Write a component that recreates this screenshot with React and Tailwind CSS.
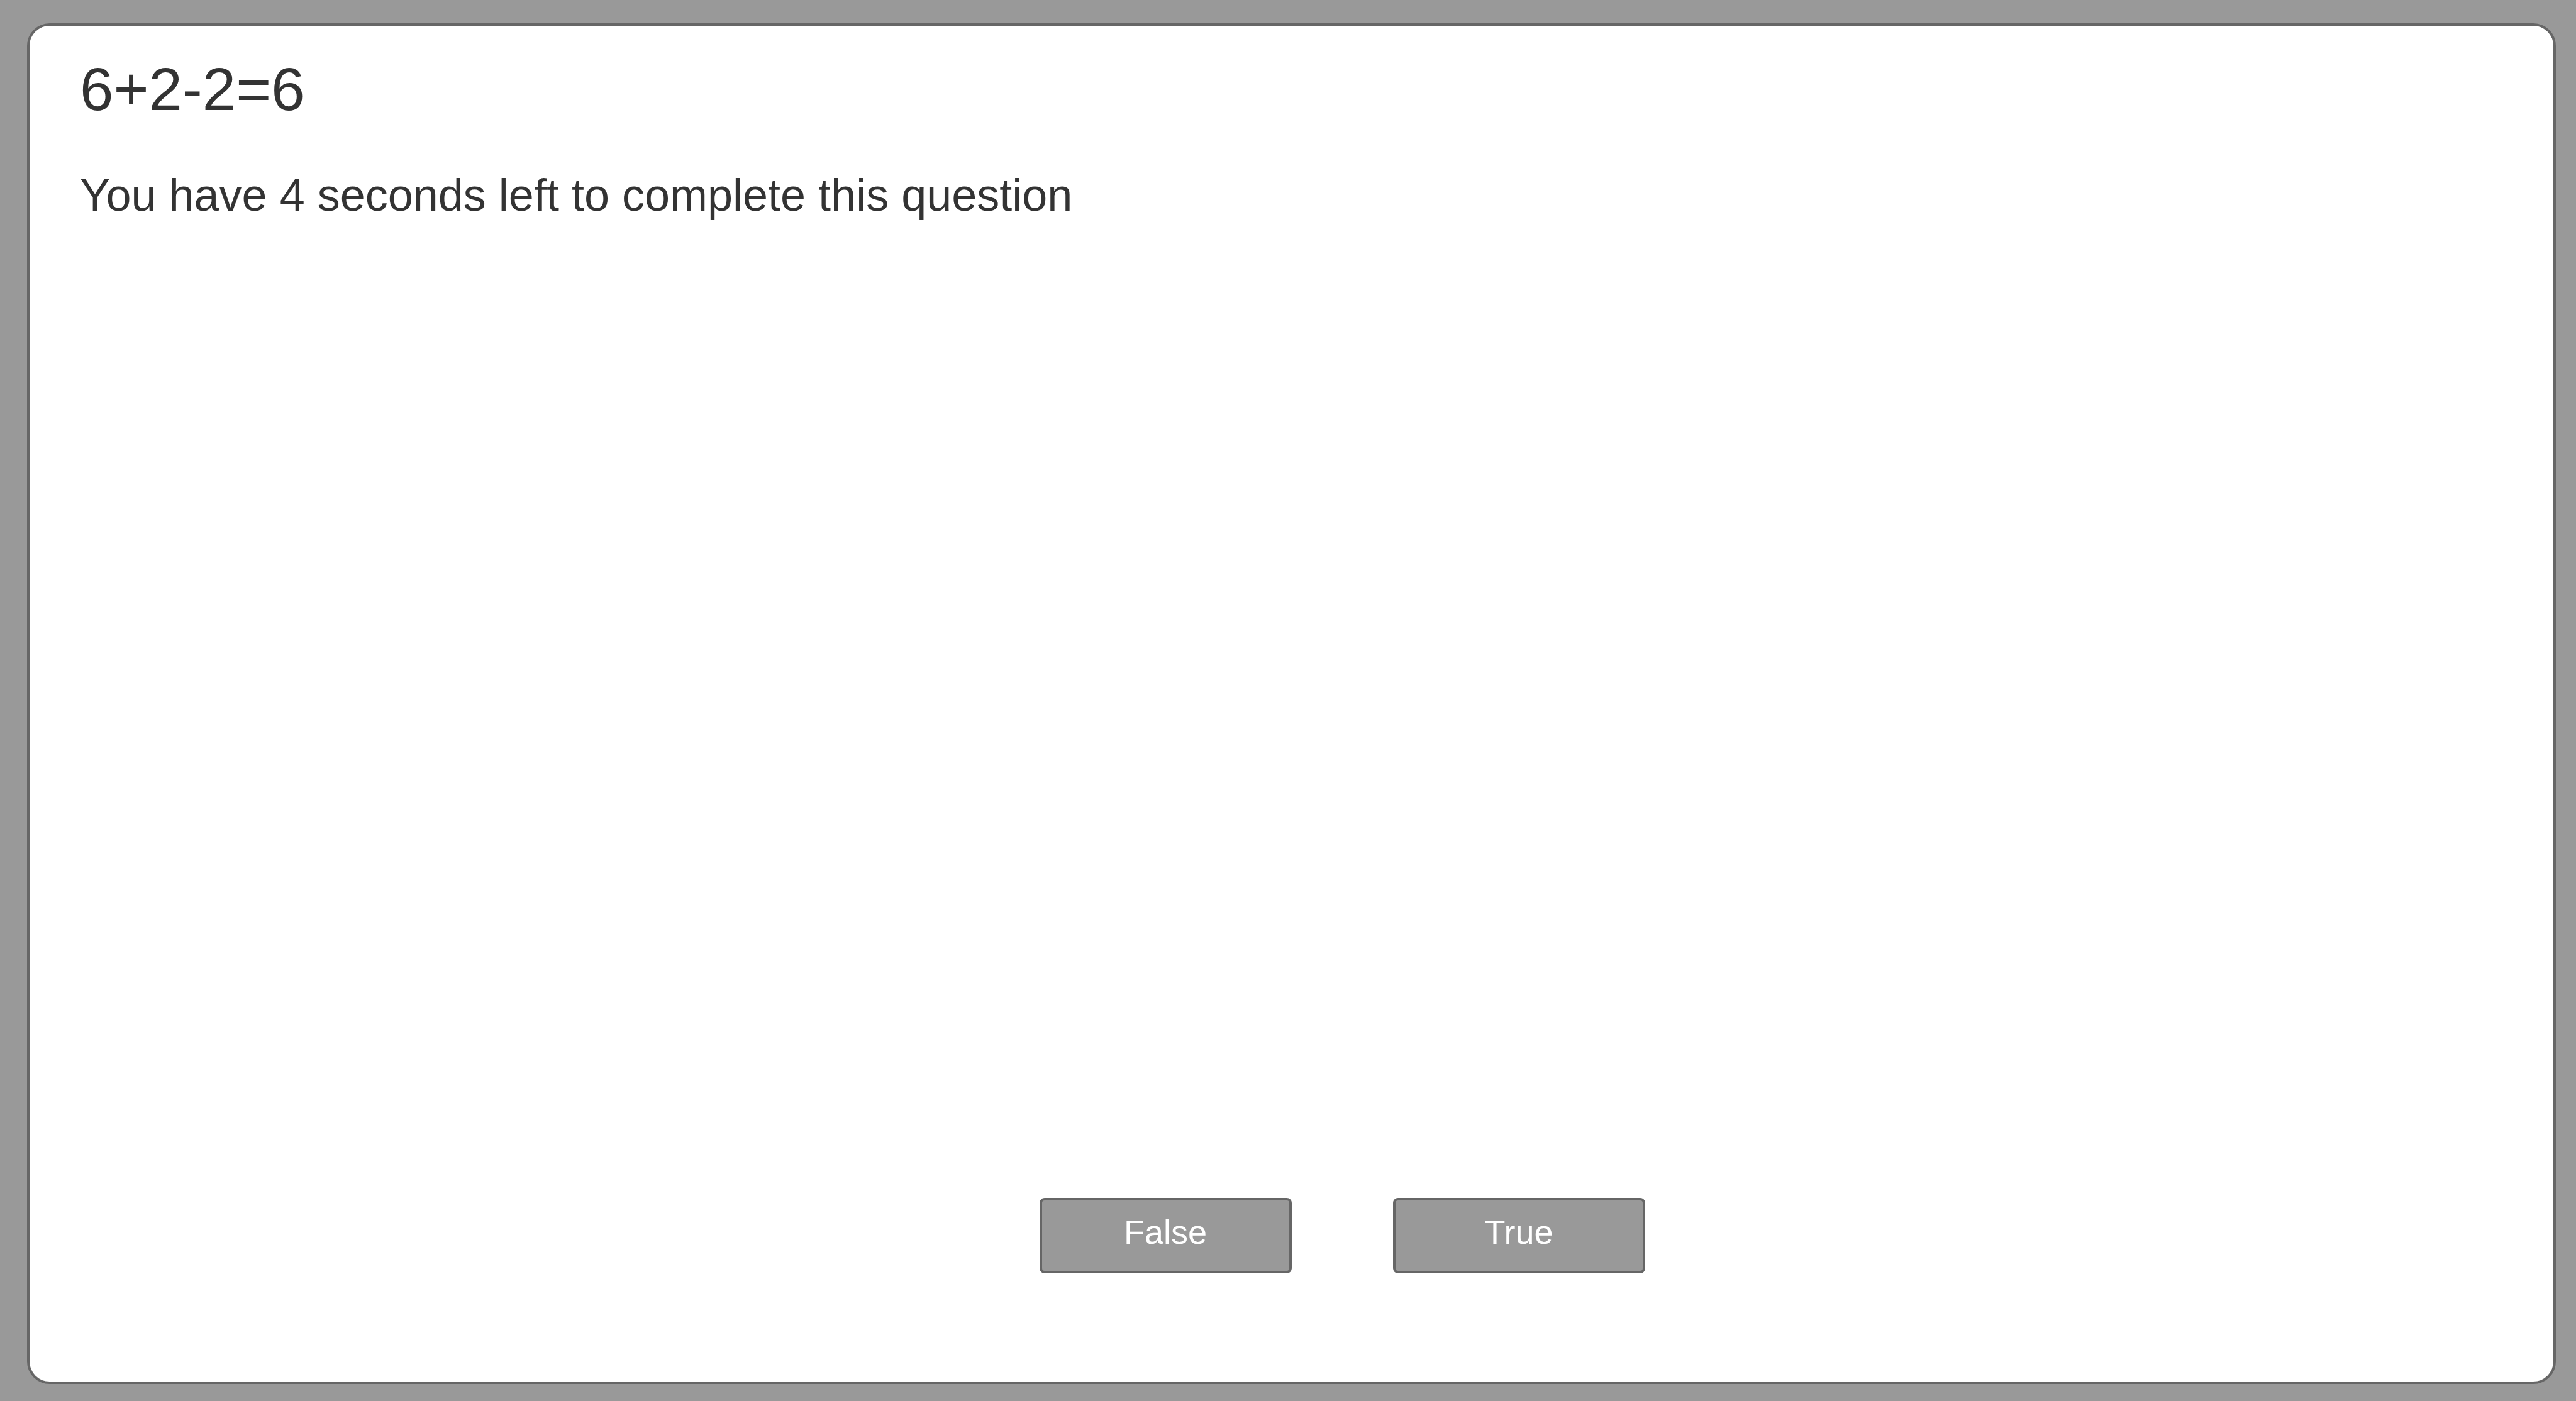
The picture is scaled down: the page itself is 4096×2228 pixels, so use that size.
function AnswerButton({ children }) {
  return (
    <button
      type="button"
      className="ml-[161px] h-30 w-[401px] rounded-lg border-4 border-[#666666] bg-[#999999] pb-3 text-[54px] leading-[64px] text-white"
    >
      {children}
    </button>
  );
}

export default function App() {
  return (
    <div className="flex min-h-screen flex-col bg-[#999999] pt-[37px] pr-8 pb-[27px] pl-[43px] font-['Liberation_Sans',Arial,sans-serif] text-[#333333]">
      <main className="flex flex-1 flex-col rounded-[36px] border-4 border-[#666666] bg-white px-20 pt-[45px] pb-[172px]">
        <h1 className="text-[96px] leading-[112px]">6+2-2=6</h1>
        <p className="mt-[70px] text-[72px] leading-[84px]">
          You have 4 seconds left to complete this question
        </p>
        <div className="mt-auto flex justify-center">
          <AnswerButton>False</AnswerButton>
          <AnswerButton>True</AnswerButton>
        </div>
      </main>
    </div>
  );
}
